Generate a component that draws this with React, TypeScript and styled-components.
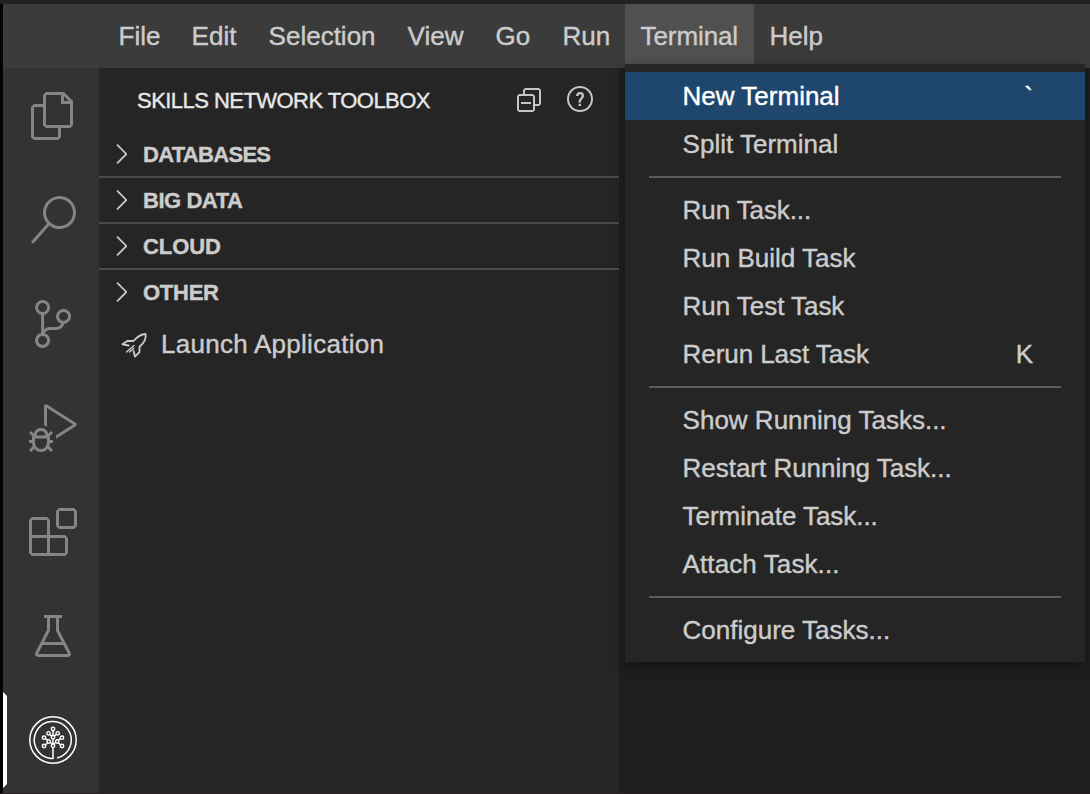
import React from "react";
import styled, { createGlobalStyle, css } from "styled-components";
import {
  VscFiles,
  VscSearch,
  VscSourceControl,
  VscDebugAlt,
  VscExtensions,
  VscBeaker,
  VscCollapseAll,
  VscQuestion,
  VscChevronRight,
} from "react-icons/vsc";

const GlobalStyle = createGlobalStyle`
  * { box-sizing: border-box; }
  body {
    margin: 0;
    background: #1e1e1e;
    font-family: "Liberation Sans", Arial, sans-serif;
    color: #cccccc;
    overflow: hidden;
  }
  svg { display: block; flex: none; }
`;

const Window = styled.div`
  width: 1090px;
  height: 794px;
  display: flex;
  flex-direction: column;
  border-top: 4px solid #222222;
  border-bottom: 1px solid #272326;
  background: #1e1e1e;
`;

const Frame = styled.div`
  flex: 1;
  min-height: 0;
  display: flex;
  flex-direction: column;
  border-left: 3px solid #000000;
`;

const MenuBar = styled.nav`
  height: 64px;
  flex: none;
  display: flex;
  padding-left: 100px;
  background: #3b3b3b;
`;

const MenuTitle = styled.div<{ $w: number; $open?: boolean }>`
  position: relative;
  width: ${(p) => p.$w}px;
  padding-left: 15.6px;
  line-height: 64px;
  font-size: 26px;
  white-space: nowrap;
  background: ${(p) => (p.$open ? "#505050" : "transparent")};
`;

const Dropdown = styled.div`
  position: absolute;
  top: 60px;
  left: 0;
  z-index: 2;
  width: 460px;
  padding: 8px 0;
  background: #252525;
  box-shadow: 0 4px 12px rgba(0, 0, 0, 0.36);
`;

const Command = styled.div<{ $active?: boolean }>`
  display: flex;
  justify-content: space-between;
  height: 48px;
  padding: 0 52px 0 57.6px;
  line-height: 48px;
  font-size: 26px;
  ${(p) =>
    p.$active &&
    css`
      background: #1f476e;
      color: #ffffff;
    `}
`;

const Label = styled.span<{ $track?: number }>`
  letter-spacing: ${(p) => p.$track ?? 0}px;
  white-space: nowrap;
  -webkit-text-stroke: 0.4px currentColor;
`;

const Separator = styled.div`
  height: 2px;
  margin: 8px 24px;
  background: #5c5c5c;
`;

const Workbench = styled.div`
  flex: 1;
  min-height: 0;
  display: flex;
`;

const ActivityBar = styled.aside`
  width: 96px;
  flex: none;
  display: flex;
  flex-direction: column;
  gap: 8px;
  background: #333333;
`;

const Activity = styled.div<{ $active?: boolean }>`
  height: 96px;
  flex: none;
  display: flex;
  align-items: center;
  justify-content: center;
  border: 4px solid transparent;
  border-right: 0;
  border-left-color: ${(p) => (p.$active ? "#ffffff" : "transparent")};
  color: ${(p) => (p.$active ? "#ffffff" : "#858585")};
`;

const Sidebar = styled.section`
  width: 520px;
  flex: none;
  background: #252525;
`;

const SidebarHeader = styled.header`
  height: 64px;
  display: flex;
  align-items: center;
  justify-content: space-between;
  padding: 0 22px 0 38px;
  font-size: 22px;
  color: #e7e7e7;
  & > ${Label} {
    padding-top: 1px;
  }
`;

const Actions = styled.div`
  display: flex;
  gap: 20px;
  color: #c5c5c5;
`;

const Sections = styled.div``;

const SectionRow = styled.div`
  height: 46px;
  display: flex;
  align-items: center;
  padding-left: 6px;
  gap: 6px;
  font-size: 22px;
  font-weight: 700;
  border-top: 2px solid #4b4b4b;
  & > ${Label} {
    padding-top: 1px;
  }
  &:first-of-type {
    height: 44px;
    border-top: 0;
  }
`;

const LaunchRow = styled.div`
  height: 44px;
  margin-top: 8px;
  display: flex;
  align-items: center;
  padding-left: 21px;
  gap: 13px;
  font-size: 26px;
`;

const Rocket = () => (
  <svg
    width="28"
    height="28"
    viewBox="0 0 28 28"
    fill="none"
    stroke="#cccccc"
    strokeWidth="1.8"
    strokeLinejoin="round"
    strokeLinecap="round"
  >
    <path d="M8.5 15.5L2.5 14.3L7.3 11H13.5C18 6 21 4 25.5 4C26.5 8.5 24.5 12.5 19.5 16.8V22L15 26.6L13.5 21" />
    <path d="M6.5 22L14 15.5M9.5 22L13.8 18.2" strokeWidth="1.4" />
  </svg>
);

const TreeLogo = () => {
  const nodes = [
    [25, 14], [20.5, 18.3], [29.7, 18.3], [16, 22.7], [34, 22.7],
    [25, 22.2], [20.7, 26.5], [29.3, 26.5], [16, 31], [25, 30.7], [34, 31],
  ];
  return (
    <svg width="48" height="48" viewBox="1 1 48 48" fill="none" stroke="currentColor" strokeWidth="1.5">
      <circle cx="25" cy="25" r="23.2" />
      <path d="M25 43.4H23A18.5 18.5 0 1 1 29 43" />
      <path d="M25 15.5V29M25 32V43.9M21.7 19.3L25 22.5L28.3 19.3M17.5 23.5L25 29.5L32.5 23.5M17.3 30L20 27.5M32.7 30L30 27.5" />
      {nodes.map(([x, y]) => (
        <circle key={`${x}-${y}`} cx={x} cy={y} r="1.7" fill="#333333" strokeWidth="1.4" />
      ))}
    </svg>
  );
};

const titles: [string, number][] = [
  ["File", 73],
  ["Edit", 77],
  ["Selection", 139],
  ["View", 88],
  ["Go", 67],
  ["Run", 78],
  ["Terminal", 129],
  ["Help", 90],
];

const commands: ([string, number, string?] | null)[] = [
  ["New Terminal", 0, "`"],
  ["Split Terminal", 0],
  null,
  ["Run Task...", -0.1],
  ["Run Build Task", 0],
  ["Run Test Task", -0.05],
  ["Rerun Last Task", -0.07],
  null,
  ["Show Running Tasks...", 0],
  ["Restart Running Task...", -0.03],
  ["Terminate Task...", -0.05],
  ["Attach Task...", 0.1],
  null,
  ["Configure Tasks...", 0],
];

const shortcuts: Record<string, string> = { "Rerun Last Task": "K" };

const sections: [string, number][] = [
  ["DATABASES", -0.7],
  ["BIG DATA", -0.45],
  ["CLOUD", -0.1],
  ["OTHER", -0.25],
];

const activities = [VscFiles, VscSearch, VscSourceControl, VscDebugAlt, VscExtensions, VscBeaker];

export default function App() {
  return (
    <>
      <GlobalStyle />
      <Window>
        <Frame>
          <MenuBar>
            {titles.map(([name, w]) => (
              <MenuTitle key={name} $w={w} $open={name === "Terminal"}>
                <Label $track={name === "Terminal" ? -0.1 : 0}>{name}</Label>
                {name === "Terminal" && (
                  <Dropdown>
                    {commands.map((c, i) => {
                      if (!c) return <Separator key={i} />;
                      const key = c[2] ?? shortcuts[c[0]];
                      return (
                        <Command key={i} $active={i === 0}>
                          <Label $track={c[1]}>{c[0]}</Label>
                          {key && <Label>{key}</Label>}
                        </Command>
                      );
                    })}
                  </Dropdown>
                )}
              </MenuTitle>
            ))}
          </MenuBar>
          <Workbench>
            <ActivityBar>
              {activities.map((Icon, i) => (
                <Activity key={i}>
                  <Icon size={48} />
                </Activity>
              ))}
              <Activity $active>
                <TreeLogo />
              </Activity>
            </ActivityBar>
            <Sidebar>
              <SidebarHeader>
                <Label $track={-0.54}>SKILLS NETWORK TOOLBOX</Label>
                <Actions>
                  <VscCollapseAll size={32} />
                  <VscQuestion size={32} />
                </Actions>
              </SidebarHeader>
              <Sections>
                {sections.map(([name, track]) => (
                  <SectionRow key={name}>
                    <VscChevronRight size={32} />
                    <Label $track={track}>{name}</Label>
                  </SectionRow>
                ))}
              </Sections>
              <LaunchRow>
                <Rocket />
                <Label $track={0.27}>Launch Application</Label>
              </LaunchRow>
            </Sidebar>
          </Workbench>
        </Frame>
      </Window>
    </>
  );
}
